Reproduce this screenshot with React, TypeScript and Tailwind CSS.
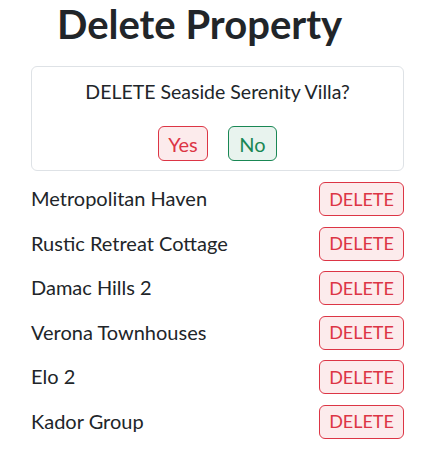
import React from 'react';

const properties = [
  'Metropolitan Haven',
  'Rustic Retreat Cottage',
  'Damac Hills 2',
  'Verona Townhouses',
  'Elo 2',
  'Kador Group',
];

const App: React.FC = () => {
  return (
    <div className="w-[430px] h-[464px] bg-white text-[#212529] font-['Lato',sans-serif]">
      <h1 className="pl-[57px] text-[40px] font-bold leading-[48px]">Delete Property</h1>

      <div className="ml-[31px] mt-[18px] w-[373px] h-[105px] rounded-md border border-[#dee2e6] flex flex-col items-center pt-[12px]">
        <p className="text-[19.5px] leading-[26px]">DELETE Seaside Serenity Villa?</p>
        <div className="mt-[21px] flex gap-[20px]">
          <button className="w-[50px] h-[35px] rounded-md border border-[#dc3545] bg-[#fcebec] text-[#dc3545] text-[20px]">
            Yes
          </button>
          <button className="w-[49px] h-[35px] rounded-md border border-[#198754] bg-[#e8f3ee] text-[#198754] text-[20px]">
            No
          </button>
        </div>
      </div>

      <ul className="mt-[11px] pl-[31px] pr-[26px] flex flex-col gap-[10.5px]">
        {properties.map((name) => (
          <li key={name} className="flex items-center justify-between">
            <span className="text-[20px] -mt-[2px]">{name}</span>
            <button className="w-[85px] h-[34px] rounded-md border border-[#dc3545] bg-[#fcebec] text-[#dc3545] text-[18px]">
              DELETE
            </button>
          </li>
        ))}
      </ul>
    </div>
  );
};

export default App;
